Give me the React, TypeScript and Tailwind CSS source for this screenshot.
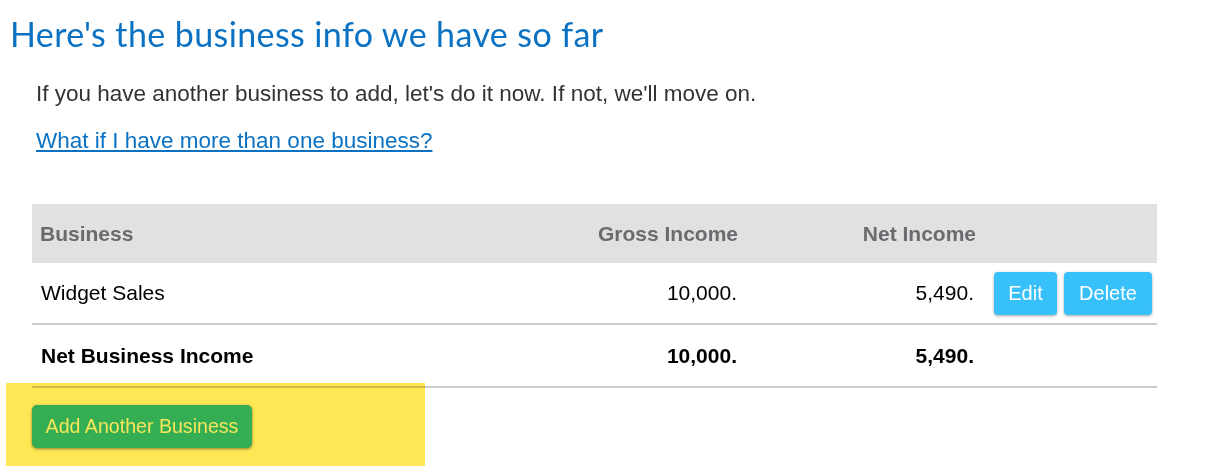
import React from "react";

export default function App() {
  const sans = { fontFamily: '"Liberation Sans", Arial, sans-serif' };
  return (
    <div className="relative w-[1226px] h-[467px] bg-white overflow-hidden" style={sans}>
      <div className="pt-[14px] pl-[10px]">
        <h1
          className="text-[34px] leading-[40px] tracking-[0.4px] text-[#0b72c3] font-normal"
          style={{ fontFamily: 'Lato, "Open Sans", sans-serif' }}
        >
          Here's the business info we have so far
        </h1>
      </div>
      <div className="pl-[36px] pt-[27px]">
        <p className="text-[22.5px] leading-[26px] text-[#333333]">
          If you have another business to add, let's do it now. If not, we'll move on.
        </p>
        <a href="#" className="block mt-[21px] text-[22.5px] leading-[26px] text-[#0b72c3] underline w-fit">
          What if I have more than one business?
        </a>
      </div>
      <div className="ml-[32px] mt-[50px] w-[1125px]">
        <div className="grid grid-cols-[468px_248px_238px_1fr] bg-[#e1e1e1] h-[59px] items-center text-[21px] font-bold text-[#6b6b6f]">
          <div className="pl-[8px]">Business</div>
          <div className="text-right pr-[10px]">Gross Income</div>
          <div className="text-right pr-[10px]">Net Income</div>
          <div />
        </div>
        <div className="grid grid-cols-[468px_248px_238px_1fr] h-[62px] items-center text-[21px] text-black border-b-2 border-[#cccccc]">
          <div className="pl-[9px]">Widget Sales</div>
          <div className="text-right pr-[11px]">10,000.</div>
          <div className="text-right pr-[12px]">5,490.</div>
          <div className="flex gap-[7px] pl-[8px]">
            <button className="h-[43px] w-[63px] rounded-[4px] bg-[#38c0fa] text-white text-[20px] shadow-[0_1px_3px_rgba(0,0,0,0.35)]">
              Edit
            </button>
            <button className="h-[43px] w-[88px] rounded-[4px] bg-[#38c0fa] text-white text-[20px] shadow-[0_1px_3px_rgba(0,0,0,0.35)]">
              Delete
            </button>
          </div>
        </div>
        <div className="grid grid-cols-[468px_248px_238px_1fr] h-[63px] items-center text-[21px] font-bold text-black border-b-2 border-[#cccccc]">
          <div className="pl-[9px]">Net Business Income</div>
          <div className="text-right pr-[11px]">10,000.</div>
          <div className="text-right pr-[12px]">5,490.</div>
          <div />
        </div>
        <div className="relative z-10 mt-[17px]">
          <button className="h-[43px] w-[220px] rounded-[5px] bg-[#34ad53] text-[#f6e65a] text-[19.6px] shadow-[0_1px_3px_rgba(0,0,0,0.45)]">
            Add Another Business
          </button>
        </div>
      </div>
      <div className="absolute left-[6px] top-[383px] w-[419px] h-[83px] bg-[#fde754] mix-blend-multiply" />
    </div>
  );
}
